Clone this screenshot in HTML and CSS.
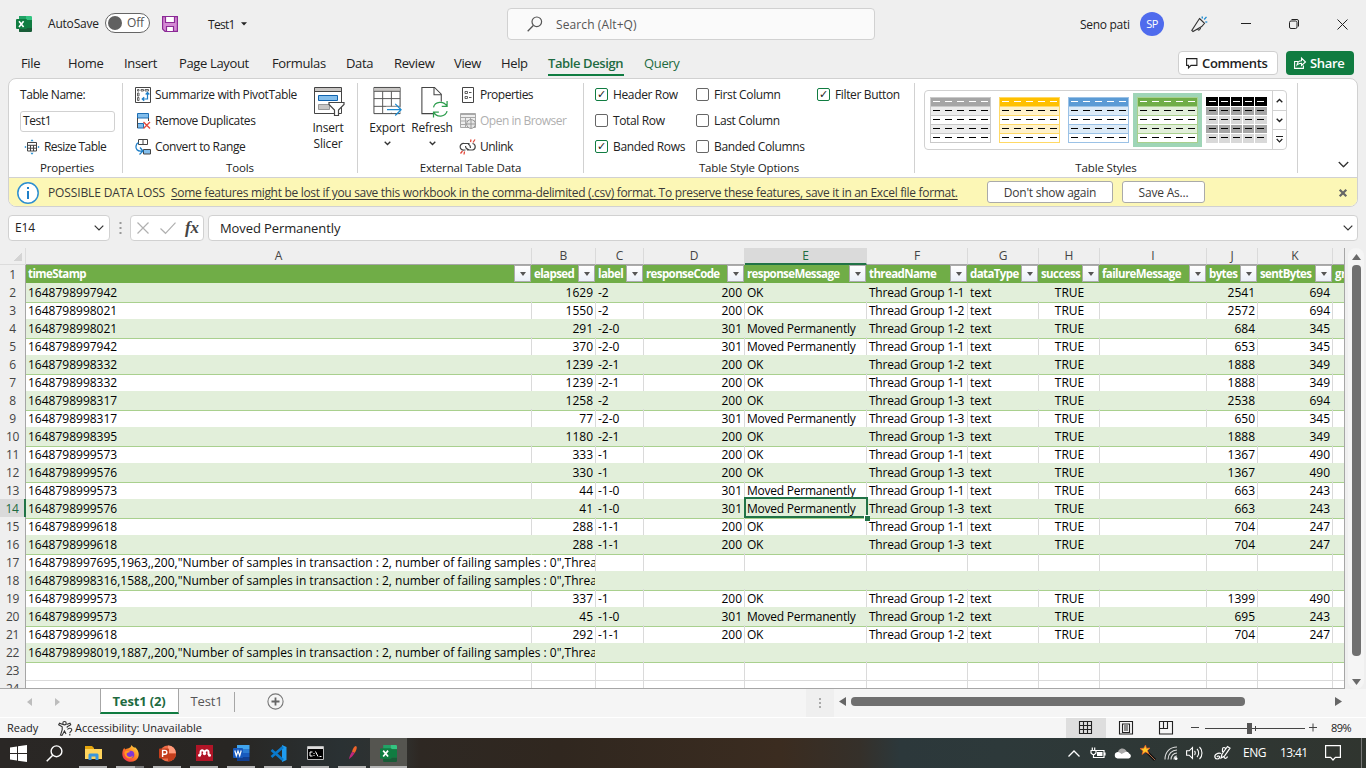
FILE: index.html
```html
<!DOCTYPE html>
<html lang="en">
<head>
<meta charset="utf-8">
<title>Test1 - Excel</title>
<link rel="stylesheet" href="styles.css">
</head>
<body>
<svg class="defs" width="0" height="0">
  <defs>
    <symbol id="excel" viewBox="0 0 16 16"><path fill="#21a366" d="M3 0h7v8H3z"/><path fill="#33c481" d="M10 0h5.2l.8.8V4h-6z"/><path fill="#107c41" d="M3 8h7V4h6v8h-6v4H3.800L3 15.200z"/><path fill="#185c37" d="M3 12h13v3.200l-.8.8H3.800L3 15.200z"/><path fill="#21a366" d="M3 4h7v4H3z"/><rect y="3" width="11" height="10" rx="1" fill="#107c41"/><path d="M3 5.300l4.600 5.600M7.600 5.300L3 10.900" stroke="#fff" stroke-width="1.600" fill="none"/></symbol>
    <symbol id="chev" viewBox="0 0 10 6"><path d="M.7.700L5 5 9.300.700" fill="none" stroke="#333" stroke-width="1.200"/></symbol>
  </defs>
</svg>
<div class="app">
  <header class="titlebar">
    <svg class="logo" width="16" height="16"><use href="#excel"/></svg>
    <span class="autosave">AutoSave</span>
    <span class="toggle"><i></i>Off</span>
    <svg class="save" width="16" height="16" viewBox="0 0 16 16"><path d="M.600.600h14.800v14.800H3L.600 13z" fill="#d48ad4" stroke="#8c2a96" stroke-width="1.200"/><path d="M3.500 1v5.500h9V1M4.500 15v-4.500h7V15" fill="#fff" stroke="#8c2a96" stroke-width="1.200"/></svg>
    <span class="docname">Test1</span>
    <svg class="doccaret" width="6" height="4" viewBox="0 0 7 4"><path d="M0 0h7L3.500 3.800z" fill="#222"/></svg>
    <div class="search">
      <svg width="16" height="16" viewBox="0 0 16 16"><circle cx="9.800" cy="5.800" r="4.800" fill="none" stroke="#555" stroke-width="1.200"/><path d="M6.300 9.500L.700 15.200" stroke="#555" stroke-width="1.300"/></svg>
      <span>Search (Alt+Q)</span>
    </div>
    <span class="user">Seno pati</span>
    <span class="avatar">SP</span>
    <svg class="mega" width="17" height="17" viewBox="0 0 17 17"><g fill="none" stroke="#333" stroke-width="1.100"><path d="M8.500 2.500l5 4.800-2.800 3.200L2 15.500.800 14.500zM6.500 12.800c.5 2 3 1.800 3.200-1.600"/></g><path d="M11 .5l.5 2M15.500.800l-2.300 2.700M14.300 5.800l2 .3" stroke="#1e8bd0" stroke-width="1.300"/></svg>
    <svg class="wmin" width="10" height="10" viewBox="0 0 10 10"><path d="M0 4.500h10" stroke="#222"/></svg>
    <svg class="wmax" width="10" height="10" viewBox="0 0 10 10"><rect x=".5" y="2" width="7.500" height="7.500" rx="1.500" fill="none" stroke="#222"/><path d="M2.500.5H8A1.500 1.500 0 0 1 9.500 2v5.500" fill="none" stroke="#222"/></svg>
    <svg class="wclose" width="11" height="11" viewBox="0 0 11 11"><path d="M.5.500l10 10M10.500.500l-10 10" stroke="#222"/></svg>
  </header>

  <nav class="tabs">
    <span class="t-file">File</span><span class="t-home">Home</span><span class="t-insert">Insert</span><span class="t-page">Page Layout</span><span class="t-form">Formulas</span><span class="t-data">Data</span><span class="t-rev">Review</span><span class="t-view">View</span><span class="t-help">Help</span><span class="t-design active">Table Design</span><span class="t-query">Query</span>
    <div class="tabbtns">
      <span class="btn comments"><svg width="12" height="11" viewBox="0 0 12 11"><path d="M.6.600h10.300v6.800H5L2.500 10V7.400H.600z" fill="none" stroke="#222" stroke-width="1.100"/></svg>Comments</span>
      <span class="btn share"><svg width="12" height="12" viewBox="0 0 12 12"><g fill="none" stroke="#fff" stroke-width="1.100"><path d="M4 4.500H.600v6.900h8.800V8.500"/><path d="M3 8c.3-3 2-4.200 4.500-4.200V1l4 4-4 3.500V6.300C5.500 6.300 4 6.800 3 8z"/></g></svg>Share</span>
    </div>
  </nav>

  <section class="ribbon">
    <div class="groups">
      <div class="group g-prop">
        <div class="body col">
          <span class="row lbl">Table Name:</span>
          <span class="row"><span class="input">Test1</span></span>
          <span class="row item resize"><svg width="16" height="16" viewBox="0 0 16 16"><path d="M3.500 3.500h9v8.500h-9zM3.500 6.300h9M3.500 9.200h9M6.500 6.300V12M9.500 6.300V12" fill="none" stroke="#444"/><path d="M8 .3l1.500 1.900h-3zM8 15.700l1.500-1.900h-3zM.300 8l1.800-1.300v2.600zM15.700 8l-1.800-1.300v2.600z" fill="#1e8bd0"/></svg>Resize Table</span>
        </div>
        <div class="caption">Properties</div>
      </div>
      <div class="group g-tools">
        <div class="body">
          <div class="col toolcol">
            <span class="row item"><svg width="16" height="16" viewBox="0 0 16 16"><path d="M.5.500h15v15H.500z" fill="#fff" stroke="#444"/><path d="M2.500 2.500h1.500v1.500H2.500zM6 2.500h2.500v1.500H6zM10 2.500h3.500v1.500H10zM2.500 6h1.500v3H2.500zM2.500 10.500h1.500v3H2.500z" fill="none" stroke="#555" stroke-width=".9"/><path d="M12.500 6v6H7.500M10.700 7.500l1.800-2 1.800 2M9.200 10.200l-2 1.800 2 1.800" fill="none" stroke="#1e7fc8" stroke-width="1.200"/></svg>Summarize with PivotTable</span>
            <span class="row item"><svg width="16" height="16" viewBox="0 0 16 16"><path d="M2.500.500h11v4.500h-11zM2.500 10.500h6v4.500h-6z" fill="#83beec" stroke="#1e6fb5"/><path d="M2.500 5v10M13.500 5v3" stroke="#444"/><path d="M8.500 9l6.500 6.500M15 9l-6.500 6.500" stroke="#e34a3c" stroke-width="1.400"/></svg>Remove Duplicates</span>
            <span class="row item"><svg width="16" height="16" viewBox="0 0 16 16"><path d="M3.500.500h9v5h-9zM8 .5v5" fill="#fff" stroke="#444"/><path d="M8.500 10.500h7v4.500h-7z" fill="#83beec" stroke="#444"/><path d="M3.500 3.500C.5 5 .3 9 2 10.800c1.300 1.400 3 1.600 5 1.200M5 8.500l3 3.500-3.500 3.500" fill="none" stroke="#1e7fc8" stroke-width="1.300"/></svg>Convert to Range</span>
          </div>
          <div class="big slicer"><svg width="31" height="32" viewBox="0 0 31 32"><path d="M.5 1.500h27v26H.500z" fill="#fff" stroke="#444"/><path d="M1 2h26v3H1z" fill="#c8c6c4"/><path d="M.5 5.500h27" stroke="#444"/><path d="M4.500 9.500h19v5h-19z" fill="#83beec" stroke="#0f62ad"/><path d="M4.500 18.500h11v5h-11z" fill="#c8c6c4" stroke="#999"/><path d="M15 16.500h15v2l-5.500 5.500v5.500h-4V24L15 18.500z" fill="#fff" stroke="#444" stroke-width="1.200"/></svg><span>Insert<br>Slicer</span></div>
        </div>
        <div class="caption">Tools</div>
      </div>
      <div class="group g-ext">
        <div class="body">
          <div class="big export"><svg width="31" height="32" viewBox="0 0 31 32"><path d="M1.500 1.500h27v27h-27z" fill="#fff" stroke="#444"/><path d="M2 2h26v3.500H2z" fill="#c8c6c4"/><path d="M1.500 5.500h27M1.500 13h27M1.500 21h27M10.500 5.500v23M19.500 5.500v23" stroke="#555" fill="none"/><path d="M14 21.500h15v6H14z" fill="#fff"/><path d="M15 24.500h14.500M23.500 18.500l6 6-6 6" fill="none" stroke="#1e8bd0" stroke-width="1.300"/></svg><span>Export</span><svg class="dd" width="7" height="5" viewBox="0 0 10 6"><path d="M1 .5l4 4 4-4" fill="none" stroke="#333" stroke-width="1.900"/></svg></div>
          <div class="big refresh"><svg width="28" height="32" viewBox="0 0 28 32"><path d="M1.500 1.500h13l7 7v20h-20z" fill="#fff" stroke="#444" stroke-width="1.100"/><path d="M14 1.500V9h7.500" fill="none" stroke="#444" stroke-width="1.100"/><circle cx="20.500" cy="24" r="8" fill="#fff"/><path d="M13.500 22c1.500-6 10.500-7 14-1M27.500 15.500V21H22M27.500 26c-1.500 6-10.500 7-14 1M13.500 32.500V27H19" fill="none" stroke="#2f9e4f" stroke-width="1.300"/></svg><span>Refresh</span><svg class="dd" width="7" height="5" viewBox="0 0 10 6"><path d="M1 .5l4 4 4-4" fill="none" stroke="#333" stroke-width="1.900"/></svg></div>
          <div class="col extcol">
            <span class="row item"><svg width="16" height="16" viewBox="0 0 16 16"><path d="M2.500.500h11v15h-11z" fill="#fff" stroke="#444"/><path d="M5 4.500h2.500v2H5zM5 9.500h2.500v2H5z" fill="none" stroke="#555" stroke-width=".9"/><path d="M9 5.500h2.500M9 10.500h2.500" stroke="#555"/></svg>Properties</span>
            <span class="row item off"><svg width="16" height="16" viewBox="0 0 16 16"><path d="M.5.500h15v14H.500z" fill="#eee" stroke="#a8a8a8"/><path d="M.5 1.500h15M.500 4.500h15M.500 8h15M.500 11.500h15M5.500 4v10.500M10.500 4v10.500" stroke="#a8a8a8"/><circle cx="11" cy="11" r="4.400" fill="#e6e6e6" stroke="#999"/><path d="M6.500 11h9M11 6.500v9" stroke="#999"/></svg>Open in Browser</span>
            <span class="row item"><svg width="16" height="16" viewBox="0 0 16 16"><path d="M9.500 4.500H4a3.300 3.300 0 1 0 0 6.500h1.500M7 11h5.500a3.300 3.300 0 0 0 0-6.500M5.500 7c0 2.500 2 3.500 4 4M10.500 9c0-2-1-3.500-2.500-4" fill="none" stroke="#444" stroke-width="1.200"/><path d="M10.500 3l.5-2.500M13 3.500l2-3M4.500 12.500L4 15.500M2.500 12l-2 2.500" stroke="#e34a3c" stroke-width="1.300"/></svg>Unlink</span>
          </div>
        </div>
        <div class="caption">External Table Data</div>
      </div>
      <div class="group g-opts">
        <div class="body">
          <div class="col c1"><span class="row check on">Header Row</span><span class="row check">Total Row</span><span class="row check on">Banded Rows</span></div>
          <div class="col c2"><span class="row check">First Column</span><span class="row check">Last Column</span><span class="row check">Banded Columns</span></div>
          <div class="col c3"><span class="row check on">Filter Button</span></div>
        </div>
        <div class="caption">Table Style Options</div>
      </div>
      <div class="group g-styles">
        <div class="body">
          <div class="gallery">
            <div class="thumbs" id="thumbs"></div>
            <div class="spin"><span><svg width="7" height="5" viewBox="0 0 10 6"><path d="M1 5.500l4-4 4 4" fill="none" stroke="#222" stroke-width="2"/></svg></span><span><svg width="7" height="5" viewBox="0 0 10 6"><path d="M1 .5l4 4 4-4" fill="none" stroke="#222" stroke-width="2"/></svg></span><span><svg width="7" height="7" viewBox="0 0 7 7"><path d="M0 .5h7M.7 3l2.800 2.800L6.300 3" fill="none" stroke="#222" stroke-width="1.200"/></svg></span></div>
          </div>
        </div>
        <div class="caption">Table Styles</div>
      </div>
      <svg class="collapse" width="11" height="7" viewBox="0 0 10 6"><use href="#chev"/></svg>
    </div>
    <div class="message">
      <svg width="22" height="22" viewBox="0 0 22 22"><circle cx="11" cy="11" r="10.200" fill="#fff" stroke="#2e8fd0" stroke-width="1.500"/><path d="M11 9v8M11 5v2" stroke="#1e7fc8" stroke-width="2"/></svg>
      <span class="mtitle">POSSIBLE DATA LOSS</span>
      <span class="mtext">Some features might be lost if you save this workbook in the comma-delimited (.csv) format. To preserve these features, save it in an Excel file format.</span>
      <span class="mbtn again">Don't show again</span>
      <span class="mbtn saveas">Save As...</span>
      <svg class="mclose" width="8" height="8" viewBox="0 0 8 8"><path d="M.7.700l6.600 6.600M7.300.700L.700 7.300" stroke="#666" stroke-width="2.200"/></svg>
    </div>
  </section>

  <div class="formula">
    <div class="box name">E14<svg width="10" height="6"><use href="#chev"/></svg></div>
    <svg class="grip" width="3" height="12" viewBox="0 0 3 12"><path d="M.5 0h2v2h-2zM.5 5h2v2h-2zM.5 10h2v2h-2z" fill="#999"/></svg>
    <div class="box fx"><svg width="12" height="12" viewBox="0 0 12 12"><path d="M.5.500l11 11M11.500.500l-11 11" stroke="#b0b0b0" stroke-width="1.200"/></svg><svg width="16" height="12" viewBox="0 0 16 12"><path d="M.5 6.500l5 4.800L15.500.700" fill="none" stroke="#b0b0b0" stroke-width="1.200"/></svg><em>fx</em></div>
    <div class="box value">Moved Permanently<svg width="10" height="6"><use href="#chev"/></svg></div>
  </div>

  <main class="sheet">
    <div class="grid" id="grid"></div>
    <div class="vscroll">
      <svg width="9" height="6" viewBox="0 0 9 6"><path d="M4.500 0L9 6H0z" fill="#6a6a6a"/></svg>
      <i></i>
      <svg width="9" height="6" viewBox="0 0 9 6"><path d="M4.500 6L9 0H0z" fill="#6a6a6a"/></svg>
    </div>
  </main>

  <div class="sheettabs">
    <div class="navarrows"><svg width="5" height="8" viewBox="0 0 5 8"><path d="M5 0v8L0 4z" fill="#bdbdbd"/></svg><svg width="5" height="8" viewBox="0 0 5 8"><path d="M0 0v8l5-4z" fill="#bdbdbd"/></svg></div>
    <span class="stab current">Test1 (2)</span>
    <span class="stab other">Test1</span>
    <svg class="add" width="17" height="17" viewBox="0 0 17 17"><circle cx="8.500" cy="8.500" r="7.600" fill="none" stroke="#777" stroke-width="1.100"/><path d="M4.500 8.500h8M8.500 4.500v8" stroke="#666" stroke-width="1.800"/></svg>
    <span class="split"><svg width="2" height="10" viewBox="0 0 2 10"><path d="M0 0h2v2H0zM0 4h2v2H0zM0 8h2v2H0z" fill="#aaa"/></svg></span>
    <div class="hscroll"><svg width="7" height="9" viewBox="0 0 7 9"><path d="M7 0v9L0 4.500z" fill="#666"/></svg><i></i><svg class="r" width="7" height="9" viewBox="0 0 7 9"><path d="M0 0v9l7-4.500z" fill="#666"/></svg></div>
  </div>

  <div class="status">
    <span class="ready">Ready</span>
    <svg width="15" height="15" viewBox="0 0 15 15"><g fill="none" stroke="#333" stroke-width="1.100"><circle cx="6.500" cy="2.200" r="1.700"/><path d="M5 3.500L1.500 2.200.700 3.700l3.500 2v3L2.500 14l1.500.4L6.500 10l1.500 3M8.500 3.500L12 2.200l.7 1.500-3.500 2v1"/><path d="M9.500 8.500c1-2 4.500-1.500 4.300.5-.2 1.500-2 1.500-2 3.200M11.800 13v1.500"/></g></svg>
    <span class="access">Accessibility: Unavailable</span>
    <div class="views">
      <span class="view on"><svg width="14" height="14" viewBox="0 0 14 14"><path d="M.5.500h12v12H.500zM4.500.500v12M8.500.500v12M.500 4.500h12M.500 8.500h12" fill="none" stroke="#222" stroke-width="1.100"/></svg></span>
      <span class="view"><svg width="14" height="14" viewBox="0 0 14 14"><path d="M.5.500h13v12.500H.500zM3.500 3h7v8.500h-7zM5 5h4M5 7h4M5 9h4" fill="none" stroke="#222" stroke-width="1.100"/></svg></span>
      <span class="view"><svg width="14" height="14" viewBox="0 0 14 14"><path d="M.5.500h13v12.500H.500zM.500 7.500h8V.500M4.500.500v7" fill="none" stroke="#222" stroke-width="1.100"/></svg></span>
    </div>
    <svg class="zoombar" width="126" height="13" viewBox="0 0 126 13"><path d="M0 5.500h8M14 6.500h100M64.500 4v5M118 5.500h8M122 1.500v8" stroke="#444" fill="none"/><path d="M56 1h5v11h-5z" fill="#555"/></svg>
    <span class="pct">89%</span>
  </div>

  <footer class="taskbar">
    <span class="app-ico start"><svg width="17" height="17" viewBox="0 0 17 17"><path fill="#fff" d="M0 2.500l7-1v6.500H0zM8 1.300L17 0v8H8zM0 9h7v6.500l-7-1zM8 9h9v8l-9-1.300z"/></svg></span>
    <span class="app-ico find"><svg width="17" height="17" viewBox="0 0 17 17"><circle cx="10.500" cy="6.300" r="5.400" fill="none" stroke="#fff" stroke-width="1.400"/><path d="M6.700 10.200L.700 16.300" stroke="#fff" stroke-width="1.500"/></svg></span>
    <span class="app-ico run"><svg width="17" height="16" viewBox="0 0 17 16"><path fill="#e5a50d" d="M0 1h7l2 2v5H0z"/><path fill="#ffd45c" d="M0 4h17v10H0z"/><path fill="#3a96dd" d="M3.500 15V9.500l1-1h8l1 1V15h-3v-3.500h-4V15z"/></svg></span>
    <span class="app-ico run two"><svg width="17" height="17" viewBox="0 0 17 17"><defs><linearGradient id="ff" x1="1" y1="0" x2="0" y2="1"><stop offset="0" stop-color="#fff04a"/><stop offset=".5" stop-color="#ff7b22"/><stop offset="1" stop-color="#f0205c"/></linearGradient></defs><path fill="url(#ff)" d="M9.500 0c1 1.600 2 2 3 3 .2-.5.2-.8.1-1.200C18 6 18 12.500 13.500 15.500 8 18.800 0 15.500.300 8.500.400 6 1.300 4 2.500 2.800c0 .7.200 1.200.6 1.600C5 3 8.500 4 9.500 0z"/><circle cx="8.500" cy="9.500" r="3.800" fill="#8136d6"/><path fill="#ff9a22" d="M2.500 7c2-2 4-1.500 6 0-2 0-2.500 1-4.200 1.500C4.500 12 9 13 11 10.500 10 15.500 2 14 2.500 7z"/></svg></span>
    <span class="app-ico run"><svg width="17" height="17" viewBox="0 0 17 17"><circle cx="9" cy="8.500" r="8" fill="#ed6c47"/><path fill="#ff9a7a" d="M9 .5a8 8 0 0 1 8 8H9z"/><path fill="#c43e1c" d="M9 16.500a8 8 0 0 0 8-8H9z"/><rect y="3.500" width="10" height="10" rx="1" fill="#c43e1c"/><path d="M3.600 12V5.400h2.300a1.900 1.900 0 0 1 0 3.900H3.600" fill="none" stroke="#fff" stroke-width="1.400"/></svg></span>
    <span class="app-ico run"><svg width="17" height="16" viewBox="0 0 17 16"><path fill="#b01527" d="M0 0h17v16H0z"/><path d="M4.500 10V7a1.700 1.700 0 0 1 2.800-1.300L8.500 7l1.200-1.300A1.700 1.700 0 0 1 12.500 7v3" fill="none" stroke="#fff" stroke-width="2"/><circle cx="8.500" cy="8.500" r="1.700" fill="#fff"/><circle cx="3.500" cy="10.300" r="1.500" fill="#fff"/><circle cx="13.500" cy="10.300" r="1.500" fill="#fff"/></svg></span>
    <span class="app-ico run"><svg width="17" height="16" viewBox="0 0 17 16"><path fill="#41a5ee" d="M4 0h12.500v4H4z"/><path fill="#2b7cd3" d="M4 4h12.500v4H4z"/><path fill="#185abd" d="M4 8h12.500v4H4z"/><path fill="#103f91" d="M4 12h12.500v4H4z"/><rect y="3" width="10" height="10" rx="1" fill="#185abd"/><path d="M1.800 5.500l1.500 5.300L5 6l1.700 4.800 1.500-5.300" fill="none" stroke="#fff" stroke-width="1.200"/></svg></span>
    <span class="app-ico run"><svg width="17" height="17" viewBox="0 0 17 17"><path fill="#1f9cf0" d="M12 0l4.500 2v13L12 17z"/><path d="M13 2L1.500 12M1.500 5L13 15" stroke="#0a7acc" stroke-width="2.600"/></svg></span>
    <span class="app-ico run"><svg width="17" height="14" viewBox="0 0 17 14"><path fill="#000" stroke="#bbb" d="M.5.500h16v13H.500z"/><path fill="#ddd" d="M1 1h15v2H1z"/><path d="M5.500 6H3v4h2.500M7 7v1M7 9v1M8.500 5.500L11 10.500M12.500 10.500h2" stroke="#fff" fill="none"/></svg></span>
    <span class="app-ico run"><svg width="14" height="14" viewBox="0 0 14 16"><path d="M11.500 0c2 1 .5 5-1.500 8L7 6.500C8 3 9.500 0 11.500 0z" fill="#f0642a"/><path d="M7 6.500L10 8c-1.500 3-4 5-6.500 7C4 12 5.500 9 7 6.500z" fill="#c0277a"/></svg></span>
    <span class="app-ico run sel"><svg width="17" height="17"><use href="#excel"/></svg></span>
    <div class="tray">
      <svg class="up" width="12" height="7" viewBox="0 0 12 7"><path d="M.5 6.500L6 1l5.500 5.500" fill="none" stroke="#fff" stroke-width="1.300"/></svg>
      <svg width="16" height="14" viewBox="0 0 16 14"><path d="M5 4.500h9v7H3.500V9M15 6.500v3M1 4.500h5V7L4.500 8.500h-2L1 7zM2.300 4.500V1.500M4.700 4.500V1.500M3.500 8.500v3" fill="none" stroke="#fff" stroke-width="1.200"/><path fill="#fff" d="M7 6h5.500v4H7z"/></svg>
      <svg class="cloud" width="17" height="12" viewBox="0 0 17 12"><path fill="#aaa" d="M4 7a4.500 4.500 0 0 1 8.800-2L13 9z"/><path fill="#fff" d="M3.500 11.500a3.300 3.300 0 0 1 0-6.500c2 0 3 1 4 2l4-2c2-1 3.500.5 3.500 1.500 3 1 2 5-.5 5z"/></svg>
      <svg width="16" height="16" viewBox="0 0 16 16"><path d="M7 7l8 8" stroke="#111" stroke-width="3"/><path d="M7 7l8 8" stroke="#a86a48"/><path fill="#ffc928" stroke="#ee5a24" stroke-width=".7" d="M5.500 0l1 3.300L10 3 7.500 5.500 9 9 5.500 7 2 9.500 3 6 0 3.500l3.800-.3z"/></svg>
      <svg width="14" height="14" viewBox="0 0 14 14"><g fill="none" stroke="#ddd" stroke-width="1.100"><path d="M1 13.500C1 6 6 1 13 1M4 13.500C4 8 8 4 13 4M7 13.500C7 10 9.500 7 13 7M10 13.500c0-2 1-3.500 3-3.500"/></g><circle cx="12" cy="12.500" r="1.500" fill="#fff"/></svg>
      <svg class="vol" width="17" height="14" viewBox="0 0 17 14"><path d="M.6 4.800h2.600L6.500 1.500v11L3.200 9.200H.600zM8.500 5c1 1 1 3 0 4M11 3c2.200 2 2.200 6 0 8M13.500 1c3.300 3 3.300 9 0 12" fill="none" stroke="#fff" stroke-width="1.100"/></svg>
      <svg width="17" height="16" viewBox="0 0 17 16"><path d="M8 9L13.500 1.500 16 3.200 10.500 11 7 13zM7 8.500C4 7.500 0 9.500 1 12.500c.7 2 4 2 4.500 0 .3-1.800-2-2-2.500-.5M10 12c1 2.500 3 1 3.500-.5M8.500 7V4c0-2 3-2 3 0" fill="none" stroke="#fff" stroke-width="1.200"/></svg>
      <span class="lang">ENG</span>
      <span class="clock">13:41</span>
      <svg width="16" height="16" viewBox="0 0 16 16"><path d="M.6.600h14.800v11.800h-5L8 15l-2.400-2.600h-5z" fill="none" stroke="#fff" stroke-width="1.200"/></svg>
    </div>
  </footer>
</div>
<script src="app.js"></script>
</body>
</html>
```
FILE: app.js
```js
const headers = ["timeStamp", "elapsed", "label", "responseCode", "responseMessage", "threadName", "dataType", "success", "failureMessage", "bytes", "sentBytes", "gr"];

// timeStamp, elapsed, label, responseCode, thread, bytes, sentBytes
const samples = [
  ["1648798997942", 1629, "-2", 200, "1-1", 2541, 694],
  ["1648798998021", 1550, "-2", 200, "1-2", 2572, 694],
  ["1648798998021", 291, "-2-0", 301, "1-2", 684, 345],
  ["1648798997942", 370, "-2-0", 301, "1-1", 653, 345],
  ["1648798998332", 1239, "-2-1", 200, "1-2", 1888, 349],
  ["1648798998332", 1239, "-2-1", 200, "1-1", 1888, 349],
  ["1648798998317", 1258, "-2", 200, "1-3", 2538, 694],
  ["1648798998317", 77, "-2-0", 301, "1-3", 650, 345],
  ["1648798998395", 1180, "-2-1", 200, "1-3", 1888, 349],
  ["1648798999573", 333, "-1", 200, "1-1", 1367, 490],
  ["1648798999576", 330, "-1", 200, "1-3", 1367, 490],
  ["1648798999573", 44, "-1-0", 301, "1-1", 663, 243],
  ["1648798999576", 41, "-1-0", 301, "1-3", 663, 243],
  ["1648798999618", 288, "-1-1", 200, "1-1", 704, 247],
  ["1648798999618", 288, "-1-1", 200, "1-3", 704, 247],
  ['1648798997695,1963,,200,"Number of samples in transaction : 2, number of failing samples : 0",Threa'],
  ['1648798998316,1588,,200,"Number of samples in transaction : 2, number of failing samples : 0",Threa'],
  ["1648798999573", 337, "-1", 200, "1-2", 1399, 490],
  ["1648798999573", 45, "-1-0", 301, "1-2", 695, 243],
  ["1648798999618", 292, "-1-1", 200, "1-2", 704, 247],
  ['1648798998019,1887,,200,"Number of samples in transaction : 2, number of failing samples : 0",Threa'],
  [], []
];

const grid = document.getElementById("grid");
const cell = (cls, text = "") => `<span class="cell ${cls}">${text}</span>`;
const letters = "ABCDEFGHIJK".split("").concat("");

grid.innerHTML += `<div class="line letters"><span class="corner"></span>${letters.map(l => cell(l === "E" ? "picked" : "", l)).join("")}</div>`;
grid.innerHTML += `<div class="line head"><span class="num">1</span>${headers.map((h, i) => cell("", `<b>${h}</b>` + (i < 11 ? '<i class="filter"></i>' : ""))).join("")}</div>`;

samples.forEach((s, i) => {
  const n = i + 2;
  let cells;
  if (s.length > 1) {
    const [time, elapsed, label, code, thread, bytes, sent] = s;
    cells = [
      cell("", time), cell("right", elapsed), cell("", label), cell("right", code),
      cell(n === 14 ? "words active" : "words", code === 301 ? "Moved Permanently" : "OK"),
      cell("words", "Thread Group " + thread), cell("", "text"), cell("mid", "TRUE"),
      cell(""), cell("right", bytes), cell("right", sent), cell("")
    ].join("");
  } else {
    const wide = s.length === 1;
    cells = cell(wide ? "wide" : "", s[0] || "") + Array(wide ? 10 : 11).fill(cell("")).join("");
  }
  const kind = n > 22 ? "plain" : n % 2 ? "" : "band";
  grid.innerHTML += `<div class="line ${kind}"><span class="num ${n === 14 ? "picked" : ""}">${n}</span>${cells}</div>`;
});

// head, band, border
const styles = [
  ["#a5a5a5", "#ededed", "#c9c9c9"],
  ["#ffc000", "#fff2cc", "#ffd966"],
  ["#5b9bd5", "#ddebf7", "#9bc2e6"],
  ["#70ad47", "#e2efda", "#a9d08e"],
  ["#000000", "#a6a6a6", "#ffffff", "#d9d9d9"]
];
document.getElementById("thumbs").innerHTML = styles.map(([head, band, line, alt = "#fff"], k) => {
  let s = "";
  for (let r = 0; r < 5; r++) {
    s += `<rect x="0" y="${r * 9}" width="61" height="10" fill="${r === 0 ? head : r % 2 ? band : alt}"/>`;
    if (r) s += `<path d="M0 ${r * 9 + .5}h61" stroke="${line}"/>`;
    for (let c = 0; c < 5; c++) s += `<path d="M${3 + c * 12} ${r * 9 + 4.5}h7" stroke="${r ? "#000" : "#fff"}" stroke-width="1.100"/>`;
  }
  s += k === 4
    ? '<path d="M12.500 0v46M24.500 0v46M36.500 0v46M48.500 0v46" stroke="#fff"/>'
    : `<rect x=".5" y=".5" width="60" height="45" fill="none" stroke="${line}"/>`;
  return `<span class="thumb ${k === 3 ? "chosen" : ""}"><svg width="61" height="46" viewBox="0 0 61 46">${s}</svg></span>`;
}).join("");
```
FILE: styles.css
```css
*, *::before, *::after { box-sizing: border-box; }
body { margin: 0; overflow: hidden; font: 12px/16px "Open Sans", "Noto Sans", sans-serif; color: #222; letter-spacing: -0.15px; }
.defs { position: absolute; }
svg { display: block; flex: none; overflow: visible; }
span, em { white-space: nowrap; }
.app { width: 1366px; height: 768px; display: flex; flex-direction: column; background: #efefef; overflow: hidden; }
.app > * { flex: none; }

.titlebar { height: 48px; display: flex; align-items: center; padding-left: 16px; }
.titlebar > * { flex: none; }
.autosave { width: 57px; margin-left: 16px; letter-spacing: -0.2px; }
.toggle { width: 45px; height: 20px; margin-top: -2px; border: 1px solid #666; border-radius: 10px; background: #fff; display: flex; align-items: center; gap: 5px; padding-left: 2px; color: #555; }
.toggle i { width: 14px; height: 14px; border-radius: 50%; background: #606060; }
.save { margin-left: 12px; }
.docname { width: 26px; margin-left: 30px; padding-top: 1px; letter-spacing: -0.7px; }
.doccaret { margin-left: 7px; }
.search { width: 368px; height: 32px; margin-left: 260px; border: 1px solid #d1d1d1; border-radius: 4px; background: #fafafa; display: flex; align-items: center; padding-left: 19px; gap: 13px; color: #555; letter-spacing: 0.1px; }
.search span { padding-top: 1px; }
.user { width: 51px; margin-left: 205px; padding-top: 1px; letter-spacing: -0.3px; }
.avatar { width: 24px; height: 24px; margin-left: 9px; border-radius: 50%; background: #4f6bed; color: #fff; display: grid; place-items: center; font-size: 11px; letter-spacing: -0.5px; }
.mega { margin-left: 27px; }
.wmin { margin-left: 33px; }
.wmax { margin-left: 38px; }
.wclose { margin-left: 38px; }

.tabs { height: 30px; display: flex; align-items: center; font-size: 13px; letter-spacing: -0.35px; padding-left: 21px; }
.tabs > span { flex: none; height: 30px; line-height: 30px; }
.t-file { width: 47px; } .t-home { width: 56px; } .t-insert { width: 55px; } .t-page { width: 93px; } .t-form { width: 74px; }
.t-data { width: 48px; } .t-rev { width: 60px; } .t-view { width: 47px; } .t-help { width: 47px; } .t-design { width: 76px; } .t-query { width: 60px; margin-left: 20px; color: #1e6b41; }
.tabs > .active { font-weight: 600; color: #1e6b41; letter-spacing: -0.4px; height: 26px; line-height: 26px; border-bottom: 2px solid #107c41; }
.tabbtns { margin-left: auto; padding-right: 12px; display: flex; gap: 8px; }
.btn { height: 24px; border-radius: 4px; display: flex; align-items: center; font-weight: 600; letter-spacing: -0.35px; }
.comments { width: 100px; border: 1px solid #cfcfcf; background: #fff; padding-left: 7px; gap: 4px; }
.share { width: 68px; background: #107c41; color: #fff; padding-left: 8px; gap: 4px; }

.ribbon { width: 1350px; height: 129px; margin-left: 8px; border: 1px solid #d1d1d1; border-radius: 8px; background: #fff; overflow: hidden; letter-spacing: -0.38px; }
.groups { height: 99px; display: flex; padding-top: 4px; border-bottom: 1px solid #d1d1d1; }
.group { flex: none; height: 90px; border-right: 1px solid #d1d1d1; display: flex; flex-direction: column; }
.body { flex: none; display: flex; height: 78px; margin-top: -1px; }
.col { display: flex; flex-direction: column; }
.row { flex: none; height: 26px; display: flex; align-items: center; }
.caption { text-align: center; line-height: 15px; font-size: 11.500px; letter-spacing: -0.15px; }
.item { gap: 4px; }
.off { color: #b0b0b0; }
.g-prop { width: 114px; }
.g-prop .body { padding-left: 11px; }
.g-prop .caption { padding-left: 3px; }
.lbl { letter-spacing: -0.45px; }
.input { width: 95px; height: 21px; border: 1px solid #d1d1d1; border-radius: 3px; padding-left: 2px; line-height: 18px; }
.resize { padding-left: 4px; letter-spacing: -0.55px; }
.g-tools { width: 235px; }
.toolcol { width: 176px; padding-left: 12px; }
.big { display: flex; flex-direction: column; align-items: center; text-align: center; padding-top: 4px; letter-spacing: -0.2px; }
.big span { margin-top: 2px; }
.slicer { width: 58px; flex: none; margin-left: 1px; }
.slicer svg { margin-left: 3px; }
.g-ext { width: 226px; }
.export { width: 46px; margin-left: 6px; }
.refresh { width: 46px; margin-left: -1px; }
.export svg:first-child, .refresh svg:first-child { height: 31px; margin-bottom: 1px; }
.refresh svg:first-child { margin-left: 3px; }
.big .dd { margin-top: 5px; }
.extcol { margin-left: 5px; letter-spacing: -0.5px; }
.g-opts { width: 331px; }
.c1 { width: 101px; margin-left: 11px; }
.c2 { width: 121px; }
.check { gap: 5px; letter-spacing: -0.36px; }
.check::before { content: ""; width: 13px; height: 13px; margin-top: -1px; border: 1px solid #666; border-radius: 2px; line-height: 11px; text-align: center; letter-spacing: 0; }
.check.on::before { content: "✓"; border-color: #107c41; font-family: "DejaVu Sans", sans-serif; font-size: 11px; }
.g-styles { width: 383px; }
.gallery { width: 363px; height: 60px; margin: 8px 0 0 9px; border: 1px solid #d1d1d1; border-radius: 4px; display: flex; }
.thumbs { display: flex; width: 347px; height: 58px; padding: 2px 0 0 1px; }
.thumb { width: 69px; height: 54px; padding: 4px; flex: none; }
.chosen { background: #9fd5b7; }
.spin { flex: 1; border-left: 1px solid #d1d1d1; display: flex; flex-direction: column; }
.spin span { flex: 1; display: grid; place-items: center; border-bottom: 1px solid #d1d1d1; }
.spin span:last-child { border: 0; }
.collapse { margin: 78px 0 0 40px; }
.message { height: 28px; background: #fcf7b6; display: flex; align-items: center; padding: 1px 0 0 8px; color: #3b3a39; }
.message > * { flex: none; }
.mtitle { width: 118px; margin-left: 9px; letter-spacing: -0.12px; }
.mtext { width: 787px; margin-left: 5px; text-decoration: underline; text-underline-offset: 2px; letter-spacing: -0.315px; }
.mbtn { height: 22px; margin-top: -1px; border: 1px solid #aaa; border-radius: 3px; background: #fff; text-align: center; line-height: 21px; }
.again { width: 126px; margin-left: 29px; letter-spacing: -0.25px; }
.saveas { width: 83px; margin-left: 9px; letter-spacing: -0.2px; }
.mclose { margin-left: 134px; }

.formula { height: 41px; padding: 8px 8px 7px; display: flex; align-items: center; font-size: 13px; letter-spacing: -0.1px; }
.box { height: 26px; border: 1px solid #d1d1d1; border-radius: 4px; background: #fff; display: flex; align-items: center; }
.name { width: 102px; padding: 0 5px 0 6px; justify-content: space-between; font-size: 12px; }
.grip { margin-left: 9px; }
.fx { width: 74px; margin-left: 8px; padding-left: 6px; gap: 11px; }
.fx em { font: italic bold 17px "Liberation Serif", serif; color: #444; margin-left: -2px; }
.value { flex: 1; margin-left: 4px; padding: 0 4px 0 11px; justify-content: space-between; }

.sheet { height: 441px; display: flex; }
.grid { width: 1345px; height: 441px; overflow: hidden; border-right: 1px solid #a6a6a6; border-bottom: 1px solid #a6a6a6; letter-spacing: 0; }
.line { display: grid; grid-template-columns: 26px 506px 64px 48px 101px 122px 101px 71px 61px 107px 51px 75px 12px; height: 18px; color: #000; background: #fff; }
.cell { overflow: hidden; padding: 1px 2px 0; line-height: 17px; border-right: 1px solid #dadada; border-bottom: 1px solid #a9d08e; min-width: 0; }
.num { background: #efefef; border-right: 1px solid #a6a6a6; border-bottom: 1px solid #dcdcdc; text-align: center; line-height: 19px; color: #444; letter-spacing: -0.4px; }
.num.picked { background: #dadada; color: #1e6b41; border-right: 2px solid #217346; }
.letters { height: 17px; background: #efefef; color: #444; }
.letters .cell { text-align: center; border-bottom: 1px solid #a6a6a6; line-height: 15px; padding-top: 0; }
.letters .cell.picked { background: #dadada; color: #1e6b41; border-bottom: 2px solid #217346; }
.corner { border-right: 1px solid #dcdcdc; border-bottom: 1px solid #dcdcdc; padding: 4px 0 0 13px; }
.corner::before { content: ""; display: block; width: 9px; height: 9px; background: linear-gradient(135deg, transparent 50%, #d4d4d4 50%); }
.head .cell { background: #70ad47; border-right-color: #70ad47; color: #fff; display: flex; justify-content: space-between; padding: 0 0 0 2px; font-size: 11.500px; letter-spacing: -0.6px; }
.head b { flex: 1 1 0; min-width: 0; overflow: visible; font-weight: 700; line-height: 18px; }
.filter { flex: none; width: 17px; height: 17px; border: 1px solid #ababab; background: linear-gradient(#fff, #eaeff7); display: grid; place-items: center; }
.filter::before { content: ""; border: 3.500px solid transparent; border-top: 4px solid #555; border-bottom: 0; }
.band .cell { background: #e2efda; border-right-color: #e2efda; }
.plain .cell { border-bottom-color: #dadada; }
.right { text-align: right; }
.mid { text-align: center; padding-left: 3px; }
.words { letter-spacing: -0.24px; }
.wide { grid-column: span 2; letter-spacing: 0; padding-right: 0; }
.cell.active { position: relative; overflow: visible; }
.cell.active::before { content: ""; position: absolute; left: -1px; top: -2px; width: 124px; height: 21px; border: 2px solid #217346; }
.cell.active::after { content: ""; position: absolute; right: -4px; bottom: -3px; width: 6px; height: 6px; background: #217346; border: solid #fff; border-width: 1px 0 0 1px; }
.vscroll { width: 16px; margin-left: 3px; background: #f5f5f5; border-radius: 8px; display: flex; flex-direction: column; align-items: center; padding-top: 6px; }
.vscroll i { width: 9px; height: 391px; border-radius: 4px; background: #707070; margin: 5px 0 23px; }

.sheettabs { height: 28px; background: #f5f5f5; display: flex; align-items: center; font-size: 13px; padding-bottom: 3px; }
.sheettabs > * { flex: none; }
.navarrows { width: 100px; padding-left: 27px; display: flex; gap: 23px; }
.stab { height: 25px; line-height: 25px; text-align: center; align-self: flex-start; }
.current { width: 79px; background: #fff; border: solid #a6a6a6; border-width: 0 1px; border-bottom: 2px solid #107c41; color: #1e6b41; font-weight: 700; letter-spacing: -0.15px; padding-right: 1px; }
.other { width: 56px; color: #555; border-right: 1px solid #a6a6a6; height: 20px; margin-top: 3px; line-height: 19px; }
.add { margin: 0 0 0 32px; }
.split { width: 28px; height: 28px; margin: 0 0 -3px 522px; background: #efefef; display: grid; place-items: center; }
.hscroll { display: flex; align-items: center; margin-left: 5px; }
.hscroll i { width: 394px; height: 9px; border-radius: 4px; background: #707070; margin-left: 5px; }
.hscroll .r { margin-left: 90px; }

.status { height: 21px; background: #f5f5f5; display: flex; align-items: center; font-size: 11px; border-top: 1px solid #fff; letter-spacing: 0; }
.status > * { flex: none; }
.ready { width: 51px; padding-left: 7px; }
.status > svg:nth-child(2) { margin-left: 7px; }
.access { width: 130px; margin-left: 2px; }
.views { margin-left: 861px; display: flex; height: 20px; }
.view { width: 40px; display: grid; place-items: center; }
.view.on { background: #dedede; }
.zoombar { margin-left: 5px; }
.pct { margin-left: 14px; letter-spacing: -0.5px; }

.taskbar { height: 30px; display: flex; background: linear-gradient(90deg, #2a2725 0, #282623 230px, #2a3133 340px, #303230 400px, #2e2823 420px, #30271f 560px, #3b2c20 780px, #35302a 860px, #2c383b 900px, #2d393a 1000px, #30352f 1366px); }
.app-ico { width: 37px; display: grid; place-items: center; }
.start { width: 36px; }
.find { width: 36px; margin-right: 2px; }
.run { background: linear-gradient(#b5b5b5, #b5b5b5) no-repeat 5px 28px / 28px 2px; padding-left: 1px; }
.run.two { background-image: linear-gradient(90deg, #b5b5b5 19px, #777 19px); }
.run.sel { background-color: #555550; background-position: 0 28px; background-size: 37px 2px; padding-left: 0; }
.tray { margin-left: auto; display: flex; align-items: center; gap: 8px; color: #fff; padding-right: 20px; border-right: 1px solid #777; margin-right: 4px; }
.tray .up { margin-right: 2px; }
.tray .cloud { margin-right: 1px; }
.tray .vol { margin-right: 3px; }
.lang { width: 25px; margin-left: 4px; letter-spacing: -0.5px; }
.clock { width: 28px; margin: 0 9px 0 4px; letter-spacing: -0.6px; }
```
